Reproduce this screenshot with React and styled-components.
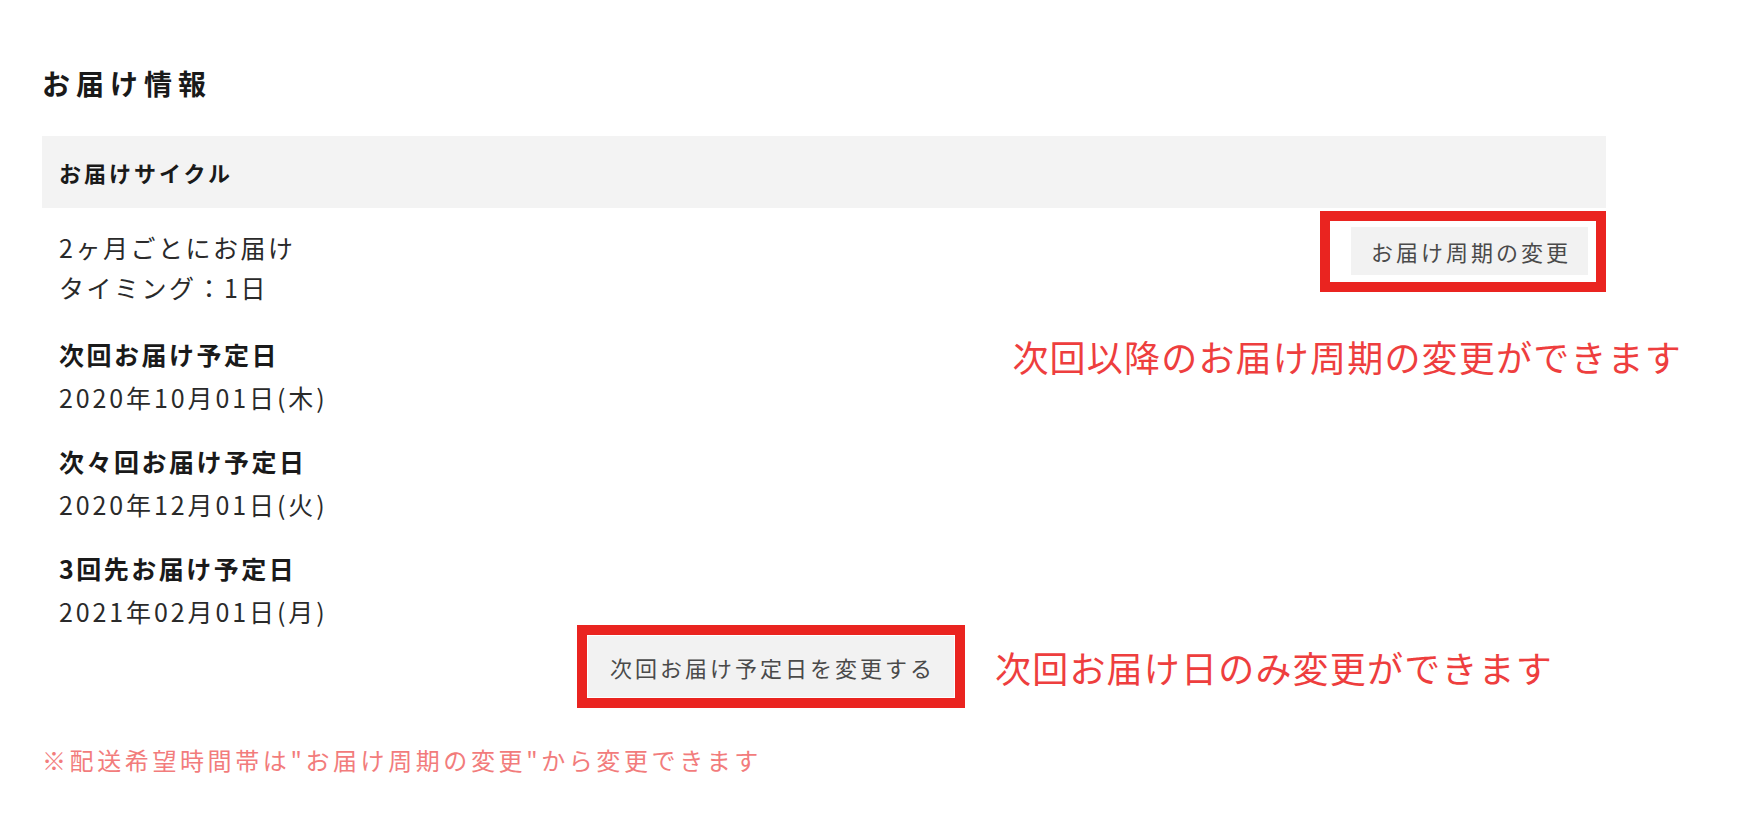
import styled, { createGlobalStyle } from "styled-components";

const GlobalStyle = createGlobalStyle`
  body {
    margin: 0;
    background: #fff;
    color: #333;
    font-family: "Noto Sans CJK JP", "Noto Sans", sans-serif;
  }
`;

const schedule = [
  { label: "次回お届け予定日", date: "2020年10月01日(木)" },
  { label: "次々回お届け予定日", date: "2020年12月01日(火)" },
  { label: "3回先お届け予定日", date: "2021年02月01日(月)" },
];

export default function App() {
  return (
    <Page>
      <GlobalStyle />
      <Title>お届け情報</Title>
      <CycleBar>
        <CycleLabel>お届けサイクル</CycleLabel>
      </CycleBar>
      <Content>
        <Details>
          <Cycle>
            <Line>2ヶ月ごとにお届け</Line>
            <Line>タイミング：1日</Line>
          </Cycle>
          {schedule.map((item) => (
            <Group key={item.label}>
              <GroupLabel>{item.label}</GroupLabel>
              <DateText>{item.date}</DateText>
            </Group>
          ))}
        </Details>
        <Aside>
          <Highlight $pad="6px 8px 7px 21px">
            <GrayButton $w={237} $h={48}>お届け周期の変更</GrayButton>
          </Highlight>
          <Note $mt="39px" $mr="-76px">
            次回以降のお届け周期の変更ができます
          </Note>
        </Aside>
      </Content>
      <NextRow>
        <Highlight $pad="1px">
          <GrayButton $w={366} $h={61}>次回お届け予定日を変更する</GrayButton>
        </Highlight>
        <Note>次回お届け日のみ変更ができます</Note>
      </NextRow>
      <Footnote>※配送希望時間帯は"お届け周期の変更"から変更できます</Footnote>
    </Page>
  );
}

const Page = styled.main`
  width: 1564px;
  padding: 64px 0 40px 42px;
`;

const Title = styled.h2`
  margin: 0 0 33px;
  font-size: 28px;
  line-height: 39px;
  font-weight: 700;
  letter-spacing: 6px;
  color: #1a1a1a;
`;

const CycleBar = styled.div`
  height: 72px;
  background: #f3f3f3;
  padding-left: 17px;
  display: flex;
  align-items: center;
`;

const CycleLabel = styled.h3`
  margin: 0;
  font-size: 22px;
  font-weight: 700;
  letter-spacing: 3px;
  color: #1a1a1a;
`;

const Content = styled.div`
  display: flex;
  justify-content: space-between;
  align-items: flex-start;
  padding-top: 3px;
`;

const Details = styled.div`
  margin-top: 16px;
  padding-left: 17px;
  display: flex;
  flex-direction: column;
`;

const Cycle = styled.div`
  margin-bottom: 5px;
`;

const Line = styled.p`
  margin: 0;
  font-size: 25px;
  line-height: 40px;
  letter-spacing: 2.5px;
  color: #2a2a2a;
`;

const Group = styled.dl`
  margin: 21px 0 0;
`;

const GroupLabel = styled.dt`
  font-size: 25px;
  line-height: 43px;
  font-weight: 700;
  letter-spacing: 2.5px;
  color: #1a1a1a;
`;

const DateText = styled.dd`
  margin: 0;
  font-size: 25px;
  line-height: 43px;
  letter-spacing: 2.9px;
  color: #2a2a2a;
`;

const Aside = styled.div`
  display: flex;
  flex-direction: column;
  align-items: flex-end;
`;

const Highlight = styled.div`
  border: 10px solid #ea2420;
  padding: ${(p) => p.$pad};
  background: #fff;
`;

const GrayButton = styled.button`
  width: ${(p) => p.$w}px;
  height: ${(p) => p.$h}px;
  border: none;
  background: #f2f2f2;
  color: #4a4a4a;
  font-family: inherit;
  font-size: 22px;
  letter-spacing: 3px;
  padding: 0 0 0 3px;
  display: flex;
  align-items: center;
  justify-content: center;
  cursor: pointer;
`;

const Note = styled.p`
  margin: ${(p) => p.$mt || 0} ${(p) => p.$mr || 0} 0 0;
  font-size: 36px;
  line-height: 50px;
  letter-spacing: 1.2px;
  color: #ee3e3e;
  white-space: nowrap;
`;

const NextRow = styled.div`
  margin: -8px 0 0 535px;
  display: flex;
  align-items: center;
  gap: 30px;
`;

const Footnote = styled.p`
  margin: 32px 0 0;
  font-size: 24px;
  line-height: 40px;
  letter-spacing: 3.6px;
  color: #f27c7c;
`;
